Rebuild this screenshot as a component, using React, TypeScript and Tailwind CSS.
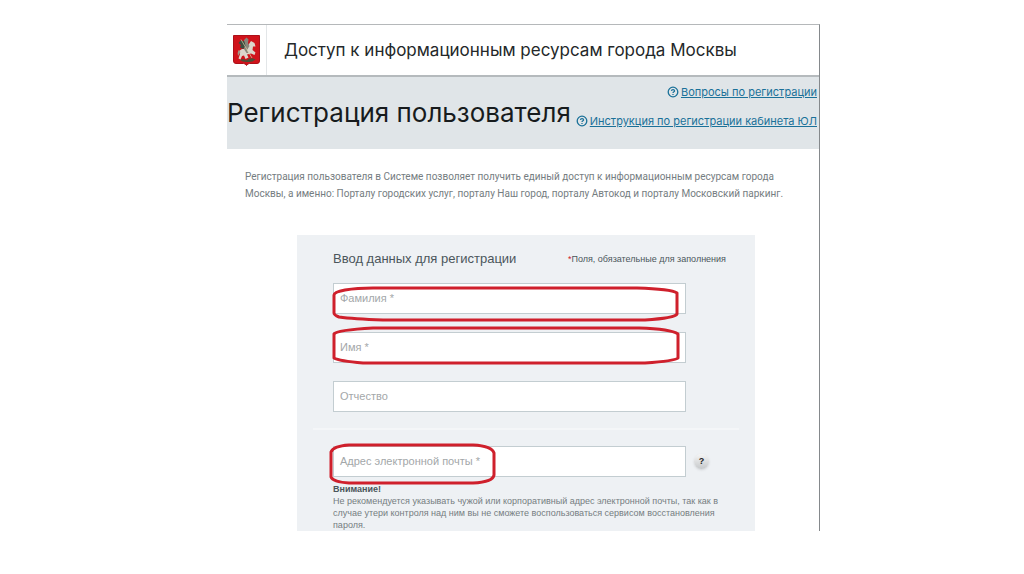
import { useState } from "react";

interface Field {
  id: string;
  label: string;
  type: string;
  markClass?: string;
  markBox?: string;
  markPath?: string;
}

const nameFields: Field[] = [
  {
    id: "lastName",
    label: "Фамилия *",
    type: "text",
    markClass: "-left-1 top-0 h-10 w-[354px]",
    markBox: "0 0 354 40",
    markPath:
      "M5 12Q5 9 16 7Q28 5 44 5H308Q342 6 348 10V31Q346 35 316 37H54Q24 36 10 34Q5 32 5 30Z",
  },
  {
    id: "firstName",
    label: "Имя *",
    type: "text",
    markClass: "-left-1 -top-2 h-12 w-[356px]",
    markBox: "0 0 356 48",
    markPath:
      "M5 10Q8 6 44 4H310Q342 5 349 10V34Q346 37 316 39H34Q10 37 5 34Z",
  },
  { id: "middleName", label: "Отчество", type: "text" },
];

const emailField: Field = {
  id: "email",
  label: "Адрес электронной почты *",
  type: "email",
  markClass: "-left-2 -top-1.5 h-12 w-[176px]",
  markBox: "0 0 176 48",
  markPath:
    "M6 12Q8 6 24 5H148Q167 6 169 13V35Q168 42 148 43H24Q8 42 6 37Z",
};

function QuestionIcon() {
  return (
    <svg
      viewBox="0 0 12 12"
      className="h-3 w-3 flex-shrink-0"
      fill="none"
      stroke="#1a7199"
      aria-hidden="true"
    >
      <circle cx="6" cy="6" r="4.8" strokeWidth="1.3" />
      <path d="M4.4 4.9C4.5 3.2 7.6 3.2 7.6 4.9C7.6 5.8 6 5.8 6 7" strokeWidth="1.2" />
      <path d="M6 7.9V9" strokeWidth="1.3" />
    </svg>
  );
}

function CoatOfArms() {
  return (
    <svg viewBox="0 0 27 31" className="h-[31px] w-[27px]" aria-label="Герб Москвы">
      <path
        d="M0.5 0.5H26.5V26Q26.5 28.5 24 28.5H16.5Q14.5 28.5 13.5 30.5Q12.5 28.5 10.5 28.5H3Q0.5 28.5 0.5 26Z"
        fill="#d0131b"
        stroke="#ad1019"
      />
      {/* dragon */}
      <path
        d="M7 25Q10 23 13 25.5Q17 22.5 20 23.5L22.5 24.5Q19 27.5 15 27Q10 27.5 7 25Z"
        fill="#4a5038"
      />
      {/* horse */}
      <path
        d="M6 16L9 14L14 14L16 9L18 6L21.5 8L22.5 11.5L20 11.5L19.5 15L22.5 17.5L21.5 20L18 18.5L14 19.5L15.5 22.5L12.5 24L11 20.5L9 21L7.5 24.5L5.5 23.5L7 19Z"
        fill="#dcd5cb"
      />
      <path d="M5.5 15Q4 18 5 21L7.5 17Z" fill="#a39a8c" />
      {/* rider */}
      <path d="M11 5L13.5 2.5L15.5 4.5L15 8L16.5 11L14 15L15.5 18L13.5 18L11 14Z" fill="#8a867b" />
      <path d="M5.5 8L8 5L11.5 6.5L12.5 11L10 14L7 12.5L8 10Z" fill="#3d4d40" />
      <path d="M8 4.5L19 23" stroke="#ded0a2" strokeWidth="0.7" />
    </svg>
  );
}

function TextField({ field }: { field: Field }) {
  const [value, setValue] = useState("");

  return (
    <div className="relative">
      <input
        id={field.id}
        type={field.type}
        value={value}
        onChange={(e) => setValue(e.target.value)}
        className="block h-[31px] w-full border border-[#c3cdd1] bg-white px-1.5 text-[11px] text-[#4f5b60] outline-none"
      />
      <label
        htmlFor={field.id}
        className={`pointer-events-none absolute inset-y-0 left-[7px] flex items-center text-[11px] text-[#a3a7a9] ${
          value ? "invisible" : ""
        }`}
      >
        {field.label}
      </label>
      {field.markPath && (
        <svg
          viewBox={field.markBox}
          className={`pointer-events-none absolute max-w-none ${field.markClass}`}
          fill="none"
          stroke="#cf202c"
          strokeWidth="3"
          strokeLinejoin="round"
          aria-hidden="true"
        >
          <path d={field.markPath} />
        </svg>
      )}
    </div>
  );
}

export default function App() {
  return (
    <div className="bg-white py-6 pl-[23px] font-['Liberation_Sans',Arial,sans-serif]">
      <div className="mx-auto max-w-[593px] border-t border-r border-t-[#b5b8ba] border-r-[#85898c]">
        {/* Header */}
        <header className="flex h-[52px] items-stretch border-b-2 border-[#b5babd]">
          <div className="flex w-10 items-center justify-center border-r border-[#e3e6e8]">
            <CoatOfArms />
          </div>
          <p className="flex items-center pt-0.5 pl-[17px] font-['Inter',sans-serif] text-[17px] text-[#24282a]">
            Доступ к информационным ресурсам города Москвы
          </p>
        </header>

        {/* Title */}
        <div className="flex h-[72px] items-start justify-between bg-[#e0e5e8] pr-0.5">
          <h1 className="pt-4 font-['Inter',sans-serif] text-[26px] leading-10 whitespace-nowrap text-[#171b1d]">
            Регистрация пользователя
          </h1>
          <nav className="flex flex-col items-end gap-[13px] pt-[7px] font-['Inter',sans-serif] text-[11px] leading-4 whitespace-nowrap text-[#1a7199]">
            <a href="#questions" className="flex items-center gap-0.5">
              <QuestionIcon />
              <span className="underline">Вопросы по регистрации</span>
            </a>
            <a href="#instruction" className="flex items-center gap-0.5">
              <QuestionIcon />
              <span className="underline">Инструкция по регистрации кабинета ЮЛ</span>
            </a>
          </nav>
        </div>

        <p className="px-[18px] pt-[19px] font-['Roboto',sans-serif] text-[10px] leading-[17px] text-[#757d81]">
          Регистрация пользователя в Системе позволяет получить единый доступ к информационным ресурсам города
          <br />
          Москвы, а именно: Порталу городских услуг, порталу Наш город, порталу Автокод и порталу Московский паркинг.
        </p>

        {/* Form */}
        <form className="mt-[33px] ml-[70px] max-w-[458px] bg-[#eef1f4] pt-4">
          <div className="flex items-center justify-between pr-[29px] pl-9">
            <h2 className="text-[13px] leading-4 text-[#4b565b]">Ввод данных для регистрации</h2>
            <p className="text-[9px] leading-4 text-[#4b565b]">
              <span className="text-[#cf202c]">*</span>Поля, обязательные для заполнения
            </p>
          </div>

          <div className="mt-4 flex flex-col gap-[18px] pr-[69px] pl-9">
            {nameFields.map((field) => (
              <TextField key={field.id} field={field} />
            ))}
          </div>

          <hr className="mx-4 mt-4 border-t-2 border-[#f4f6f8]" />

          <div className="mt-4 flex items-center pl-9">
            <div className="w-[353px]">
              <TextField field={emailField} />
            </div>
            <button
              type="button"
              aria-label="Подсказка"
              className="ml-2 h-[15px] w-[15px] rounded-full bg-linear-to-b from-[#f5f5f5] to-[#c6c9cb] text-[9px] leading-[15px] font-bold text-[#222] shadow-sm"
            >
              ?
            </button>
          </div>

          <div className="mt-1.5 pr-6 pl-9 text-[9px] leading-3 text-[#757d81]">
            <p className="font-bold text-[#4b565b]">Внимание!</p>
            <p>
              Не рекомендуется указывать чужой или корпоративный адрес электронной почты, так как в
              случае утери контроля над ним вы не сможете воспользоваться сервисом восстановления пароля.
            </p>
          </div>
        </form>
      </div>
    </div>
  );
}
